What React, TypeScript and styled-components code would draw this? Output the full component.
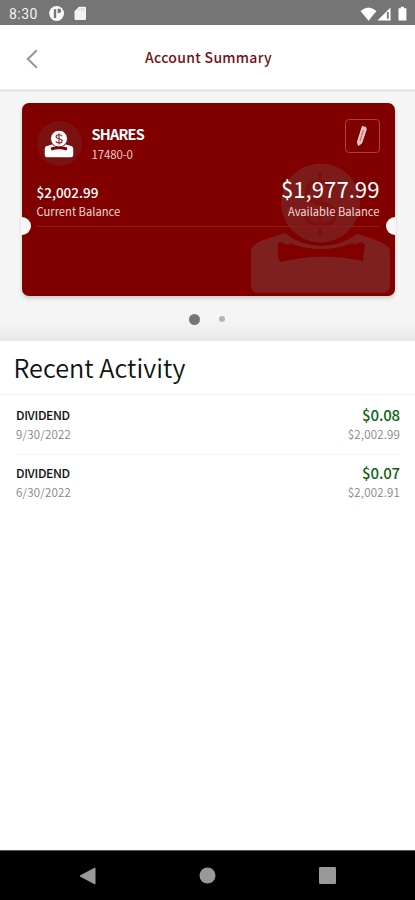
import React from "react";
import styled, { createGlobalStyle } from "styled-components";

const Global = createGlobalStyle`
  * { box-sizing: border-box; }
  html, body { margin: 0; padding: 0; background: #fff; }
  body { font-family: "Noto Sans CJK SC", "Noto Sans", sans-serif; }
`;

const Screen = styled.div`
  width: 415px;
  height: 900px;
  display: flex;
  flex-direction: column;
  background: #fff;
  overflow: hidden;
`;

const StatusBar = styled.div`
  height: 25px;
  flex: none;
  display: flex;
  align-items: center;
  padding: 2px 7px 0 9px;
  background: #757575;
  color: #f3f3f3;
`;

const Clock = styled.span`
  width: 40px;
  font: 400 14px/20px Roboto, sans-serif;
  letter-spacing: 0.45px;
`;

const StatusIcons = styled.div<{ $push?: boolean }>`
  display: flex;
  align-items: center;
  margin-left: ${(p) => (p.$push ? "auto" : "0")};
`;

const Header = styled.header`
  height: 65px;
  flex: none;
  display: grid;
  grid-template-columns: 65px 1fr 63px;
  align-items: center;
  background: #fff;
  border-bottom: 1px solid #ededed;
  box-shadow: 0 1px 2px rgba(0, 0, 0, 0.12);
  z-index: 1;
`;

const BackButton = styled.button`
  display: flex;
  padding: 3px 0 0 25px;
  border: 0;
  background: none;
`;

const Title = styled.h1`
  margin: 0 0 1px;
  text-align: center;
  font-size: 14px;
  line-height: 20px;
  font-weight: 500;
  letter-spacing: 0.3px;
  color: #760f16;
`;

const Carousel = styled.section`
  height: 251px;
  flex: none;
  display: flex;
  flex-direction: column;
  padding: 12.5px 20.5px 0 21.5px;
  background: linear-gradient(#f5f5f5 0, #f5f5f5 230px, #e9e9e9 251px);
`;

const Card = styled.article`
  position: relative;
  height: 193.5px;
  flex: none;
  display: flex;
  flex-direction: column;
  padding: 16px 15px 0;
  border-radius: 7px;
  background: #800000;
  color: #fff;
  box-shadow: 0 2px 4px rgba(0, 0, 0, 0.18);
`;

const Watermark = styled.svg`
  position: absolute;
  left: 227px;
  top: 60px;
`;

const Notch = styled.span<{ $side: "left" | "right" }>`
  position: absolute;
  top: 114.5px;
  ${(p) => p.$side}: -1px;
  width: 10px;
  height: 18px;
  background: #f7f7f7;
  border-radius: ${(p) => (p.$side === "left" ? "0 9px 9px 0" : "9px 0 0 9px")};
`;

const CardTop = styled.div`
  position: relative;
  display: flex;
  height: 62.5px;
`;

const Avatar = styled.div`
  width: 45px;
  height: 45px;
  margin-top: 2.5px;
  border-radius: 50%;
  background: #7b1111;
  display: flex;
  align-items: center;
  justify-content: center;
`;

const Account = styled.div`
  margin: 5.5px 0 0 10px;
`;

const AccountName = styled.div`
  font-size: 14.5px;
  line-height: 20px;
  font-weight: 700;
  letter-spacing: -0.8px;
`;

const AccountNumber = styled.div`
  font-size: 11.5px;
  line-height: 20px;
  letter-spacing: -0.15px;
  color: #eacccc;
`;

const EditButton = styled.button`
  display: flex;
  align-items: center;
  justify-content: center;
  width: 35px;
  height: 34px;
  margin-left: auto;
  padding: 0;
  border: 1px solid #a34545;
  border-radius: 4px;
  background: none;
`;

const Balances = styled.div`
  position: relative;
  display: flex;
  justify-content: space-between;
  height: 45.5px;
  border-bottom: 1px solid #901b1b;
`;

const Balance = styled.div<{ $end?: boolean }>`
  text-align: ${(p) => (p.$end ? "right" : "left")};
`;

const Amount = styled.div<{ $large?: boolean }>`
  height: 22px;
  font-size: ${(p) => (p.$large ? "22.2px" : "13.5px")};
  line-height: ${(p) => (p.$large ? "14px" : "22px")};
  font-weight: ${(p) => (p.$large ? 400 : 500)};
`;

const Caption = styled.div`
  font-size: 11.2px;
  line-height: 16px;
  color: #f0d6d6;
`;

const Dots = styled.div`
  display: flex;
  flex: none;
  align-items: center;
  justify-content: center;
  gap: 19px;
  height: 45px;
  padding: 1px 2px 0 0;
`;

const Dot = styled.span<{ $active?: boolean }>`
  width: ${(p) => (p.$active ? 11 : 6)}px;
  height: ${(p) => (p.$active ? 11 : 6)}px;
  border-radius: 50%;
  background: ${(p) => (p.$active ? "#757575" : "#b5b5b5")};
`;

const Activity = styled.section`
  flex: 1;
`;

const ActivityTitle = styled.h2`
  height: 54px;
  margin: 0;
  padding: 0 13.5px;
  border-bottom: 1px solid #f0f0f0;
  font-size: 25.2px;
  line-height: 53px;
  font-weight: 350;
  letter-spacing: 0.05px;
  color: #111;
`;

const Row = styled.div`
  display: flex;
  justify-content: space-between;
  height: 58px;
  margin: 0 15px 0 16px;
  padding-top: 9px;
  &:first-of-type { height: 60px; padding-top: 11px; border-bottom: 1px solid #f3f3f3; }
`;

const Cell = styled.div<{ $end?: boolean }>`
  text-align: ${(p) => (p.$end ? "right" : "left")};
`;

const RowName = styled.div`
  font-size: 12.2px;
  line-height: 19px;
  font-weight: 500;
  letter-spacing: -0.35px;
  color: #111;
`;

const RowValue = styled.div`
  font-size: 15px;
  line-height: 18px;
  margin-bottom: 1px;
  font-weight: 500;
  letter-spacing: -0.15px;
  color: #0c640f;
`;

const RowNote = styled.div`
  font-size: 11.5px;
  line-height: 18px;
  font-weight: 350;
  letter-spacing: 0.2px;
  color: #858585;
`;

const NavBar = styled.nav`
  height: 50px;
  flex: none;
  display: flex;
  justify-content: space-between;
  align-items: center;
  padding: 0 79px;
  background: #000;
  border-top: 1px solid #555;
`;

const handOutline =
  "M36 70 L24 74 Q5 79 2 86 V122 Q2 130 10 130 H133 Q141 130 141 122 V88 Q140 81 124 76 L108 71 Q92 83 72 83 Q52 83 36 70 Z";

function SavingsMark() {
  return (
    <svg width="30" height="28" viewBox="0 0 30 28">
      <path d="M3 16 Q0.8 16 0.8 18.5 V25 Q0.8 27.3 3 27.3 H27 Q29.2 27.3 29.2 25 V18.5 Q29.2 16 27 16 L22 14.5 H8 Z" fill="#fff" />
      <circle cx="15" cy="8.7" r="8.5" fill="#fff" stroke="#7b1111" strokeWidth="1" />
      <path d="M6.5 17.4 Q15 15.6 23.5 17.4 L22.5 20.4 Q15 18 7.5 20.4 Z" fill="#800000" />
      <path d="M18 6.2 Q17.3 4.8 15 4.8 Q12.1 4.8 12.1 6.6 Q12.1 8.3 15 8.7 Q18.2 9.2 18.2 11 Q18.2 13 15 13 Q12.3 13 11.7 11.3 M15 3.2 V14.5" fill="none" stroke="#8a2424" strokeWidth="1.1" />
    </svg>
  );
}

const rows = [
  { date: "9/30/2022", value: "$0.08", balance: "$2,002.99" },
  { date: "6/30/2022", value: "$0.07", balance: "$2,002.91" },
];

export default function App() {
  return (
    <Screen>
      <Global />
      <StatusBar>
        <Clock>8:30</Clock>
        <StatusIcons>
          <svg width="40" height="18" viewBox="0 0 40 18">
            <circle cx="7.6" cy="8.5" r="7.4" fill="#fafafa" />
            <path d="M6 4.2 V13" stroke="#757575" strokeWidth="2.4" />
            <path d="M8.6 3.8 H10.2 Q12.2 3.8 12.2 6 Q12.2 8 10.2 8 H8.6 Z" fill="#757575" />
            <path d="M30 1.8 H36 Q37 1.8 37 3 V13.5 Q37 15 35.8 15 H26.7 Q25.5 15 25.5 13.7 V6.2 Z" fill="#f3f3f3" />
            <path d="M30 3.5 V5.5 M32.3 3 V5.5 M34.6 3 V5.5" stroke="#cfcfcf" strokeWidth="1" />
          </svg>
        </StatusIcons>
        <StatusIcons $push>
          <svg width="48" height="18" viewBox="0 0 48 18">
            <path d="M0.5 6 Q8.5 -1.2 16.5 6 L8.5 15.7 Z" fill="#fff" />
            <path d="M30.5 2.5 V15.5 H17.5 Z" fill="#fff" />
            <path d="M27.8 7 V13.8" stroke="#757575" strokeWidth="1.8" />
            <path d="M38.5 3.2 H40.8 V1.7 H44 V3.2 H46.4 V15.5 H38.5 Z" fill="#fff" />
          </svg>
        </StatusIcons>
      </StatusBar>
      <Header>
        <BackButton aria-label="Back">
          <svg width="14" height="20" viewBox="0 0 14 20">
            <path d="M11.8 1.3 L2.8 10 L11.8 18.7" fill="none" stroke="#939aa5" strokeWidth="2.1" />
          </svg>
        </BackButton>
        <Title>Account Summary</Title>
      </Header>
      <Carousel>
        <Card>
          <Watermark width="144" height="132" viewBox="0 0 144 132">
            <circle cx="71.5" cy="40" r="39.5" fill="#7d1a1a" />
            <path d={handOutline} fill="#7f2020" />
            <path d="M31 79 Q52 87 72 87 Q92 87 113 79 L116 82 L114 98 Q72 89 32 99 L29 95 L29 81 Z" fill="#800000" />
            <path d="M40 80 Q72 92 104 80 L104 90 H40 Z" fill="#800000" />
            <path d="M85 26 Q82 19 71 19 Q58 19 58 30 Q58 38 71 40 Q86 43 86 52 Q86 62 71 62 Q60 62 56 53 M71 9 V72" fill="none" stroke="#7e1010" strokeWidth="4" />
          </Watermark>
          <Notch $side="left" />
          <Notch $side="right" />
          <CardTop>
            <Avatar><SavingsMark /></Avatar>
            <Account>
              <AccountName>SHARES</AccountName>
              <AccountNumber>17480-0</AccountNumber>
            </Account>
            <EditButton aria-label="Edit">
              <svg width="14" height="22" viewBox="0 0 14 22">
                <path d="M7.3 1.5 L10.8 2.4 L11.2 4.6 L6.6 18.2 L3.3 20.5 L2.5 16.8 Z" fill="#e6bcbc" stroke="#f6e2e2" strokeWidth="0.9" strokeLinejoin="round" />
                <path d="M8.4 5 L5 16" stroke="#b86a6a" strokeWidth="1" />
              </svg>
            </EditButton>
          </CardTop>
          <Balances>
            <Balance>
              <Amount>$2,002.99</Amount>
              <Caption>Current Balance</Caption>
            </Balance>
            <Balance $end>
              <Amount $large>$1,977.99</Amount>
              <Caption>Available Balance</Caption>
            </Balance>
          </Balances>
        </Card>
        <Dots><Dot $active /><Dot /></Dots>
      </Carousel>
      <Activity>
        <ActivityTitle>Recent Activity</ActivityTitle>
        {rows.map((r) => (
          <Row key={r.date}>
            <Cell>
              <RowName>DIVIDEND</RowName>
              <RowNote>{r.date}</RowNote>
            </Cell>
            <Cell $end>
              <RowValue>{r.value}</RowValue>
              <RowNote>{r.balance}</RowNote>
            </Cell>
          </Row>
        ))}
      </Activity>
      <NavBar>
        <svg width="17" height="18" viewBox="0 0 17 18"><path d="M16 1 V17 L1 9 Z" fill="#999" stroke="#999" strokeLinejoin="round" /></svg>
        <svg width="17" height="17" viewBox="0 0 17 17"><circle cx="8.5" cy="8.5" r="8" fill="#999" /></svg>
        <svg width="17" height="17" viewBox="0 0 17 17"><rect width="17" height="17" rx="1.2" fill="#999" /></svg>
      </NavBar>
    </Screen>
  );
}
